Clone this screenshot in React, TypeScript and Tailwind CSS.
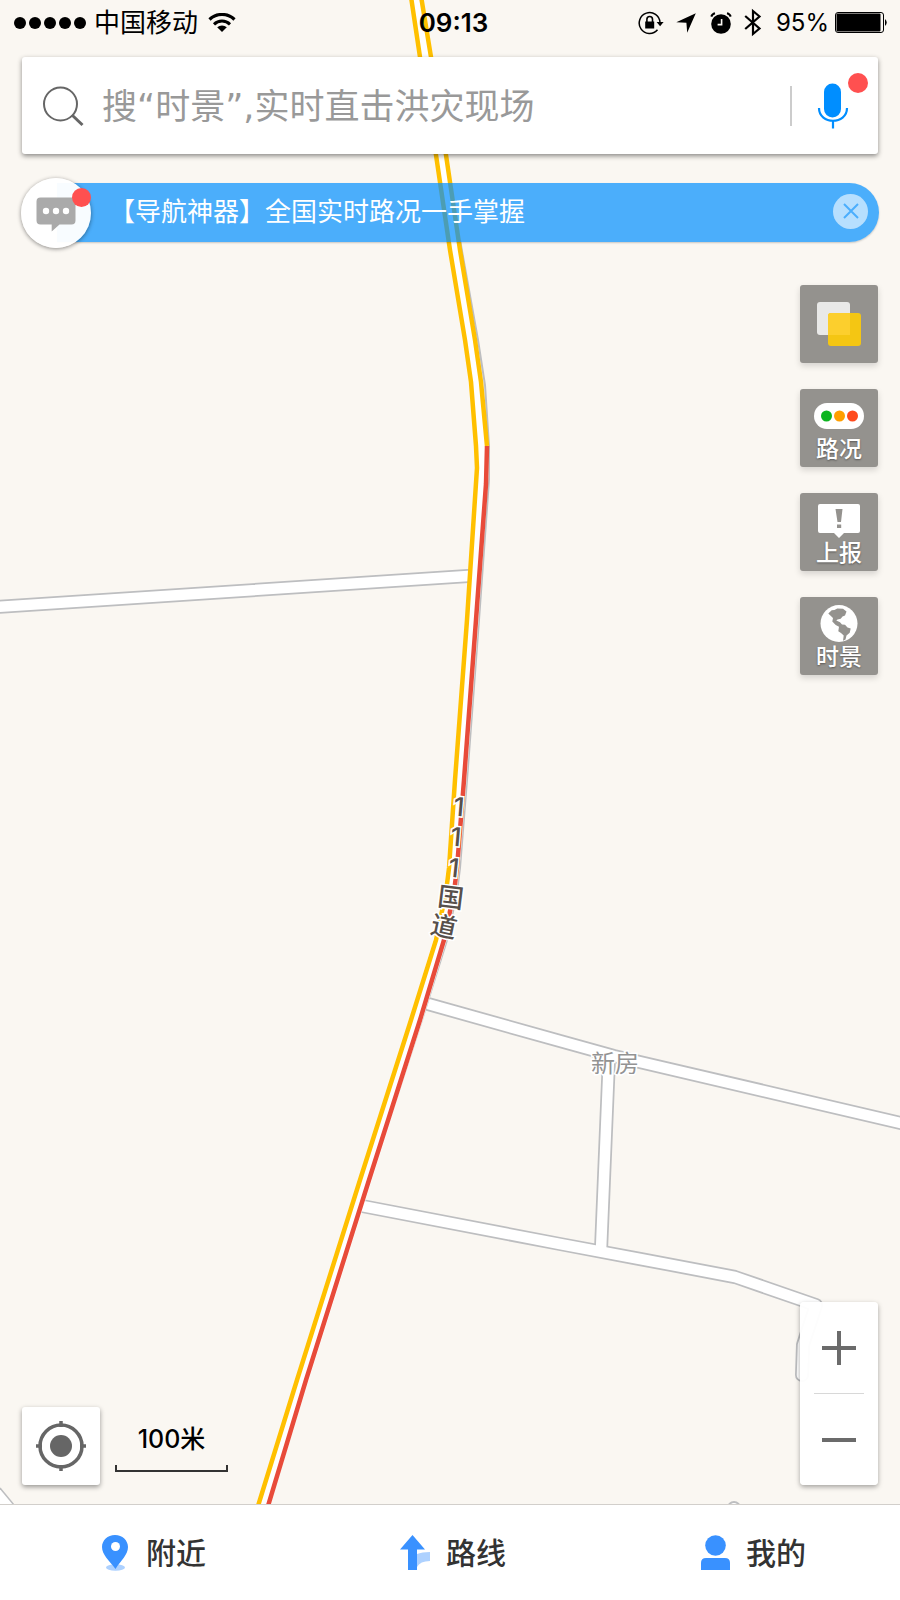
import type { ReactNode } from 'react';

const LEFT_LANE =
  'M410 -10 L420 57 L436 155 L450 250 L465 340 L471 382 L476 446 L477 468 L467 620 L455 780 L449 868 L446 892 L436 940 L411 1020 L360 1180 L297 1380 L258 1506';
const RIGHT_LANE_FREE = 'M420 -10 L431 57 L446 155 L460 250 L475 340 L481 382 L487 446';
const RIGHT_LANE_JAM =
  'M487 446 L486 484 L476 620 L464 780 L457 868 L454 892 L444 940 L420 1020 L369 1180 L306 1380 L268 1506';
const CENTER =
  'M415 -10 L426 57 L441 155 L455 250 L470 340 L476 382 L482 446 L482 476 L472 620 L460 780 L453 868 L450 892 L440 940 L416 1020 L365 1180 L302 1380 L263 1506';
const SHADOW =
  'M460 240 L478 340 L485 385 L489 446 L489 480 L479 620 L467 780 L460 868 L457 892 L447 940 L422 1020 L370 1180 L306 1380';

const SIDE_ROADS = [
  'M-5 607 L468 576',
  'M428 1004 L560 1041 L614 1056 L905 1124',
  'M609 1058 L601 1250',
  'M362 1206 L560 1244 L640 1259 L735 1277 L816 1305 L803 1345 L802 1375',
];

const ROAD_LABEL = [
  { ch: '1', x: 459, y: 806, r: 5 },
  { ch: '1', x: 456, y: 836, r: 5 },
  { ch: '1', x: 454, y: 867, r: 6 },
  { ch: '国', x: 451, y: 897, r: 7 },
  { ch: '道', x: 444, y: 926, r: 12 },
];

function MapCanvas() {
  return (
    <svg
      className="absolute inset-0 -z-10 size-full"
      viewBox="0 0 900 1504"
      preserveAspectRatio="xMidYMid slice"
      fill="none"
      aria-hidden="true"
    >
      {SIDE_ROADS.map((d) => (
        <path key={d} d={d} stroke="#bdbec0" strokeWidth="14" strokeLinejoin="round" strokeLinecap="round" />
      ))}
      {SIDE_ROADS.map((d) => (
        <path key={d} d={d} stroke="#fff" strokeWidth="10.5" strokeLinejoin="round" strokeLinecap="round" />
      ))}
      <path d="M0 1488 L14 1505 L0 1505 Z" fill="#fff" />
      <path d="M0 1488 L14 1505" stroke="#bdbec0" strokeWidth="1.5" />
      <circle cx="734" cy="1508" r="6" stroke="#bdbec0" strokeWidth="2" fill="#fff" />

      <path d={SHADOW} stroke="#bdbec0" strokeWidth="2" />
      <path d={CENTER} stroke="#fff" strokeWidth="13" />
      <path d={LEFT_LANE} stroke="#ffc000" strokeWidth="4.5" strokeLinejoin="round" />
      <path d={RIGHT_LANE_FREE} stroke="#ffc000" strokeWidth="4.5" strokeLinejoin="round" />
      <path d={RIGHT_LANE_JAM} stroke="#e84b3a" strokeWidth="4.5" strokeLinejoin="round" />

      <g
        fontSize="26"
        fontWeight="500"
        fill="#57504b"
        stroke="#fff"
        strokeWidth="3"
        paintOrder="stroke"
        textAnchor="middle"
      >
        {ROAD_LABEL.map(({ ch, x, y, r }) => (
          <text key={y} x={x} y={y + 10} transform={`rotate(${r} ${x} ${y})`}>
            {ch}
          </text>
        ))}
      </g>
      <text
        x="615"
        y="1072"
        fontSize="24"
        fill="#939393"
        stroke="#fff"
        strokeWidth="3"
        paintOrder="stroke"
        textAnchor="middle"
      >
        新房
      </text>
    </svg>
  );
}

function StatusBar() {
  return (
    <header className="grid h-[45px] grid-cols-[1fr_auto_1fr] items-center pr-[11px] pl-3.5 text-[26px] leading-8 text-black">
      <div className="flex items-center">
        <div className="flex gap-[3px]">
          {[0, 1, 2, 3, 4].map((i) => (
            <span key={i} className="size-3 rounded-full bg-black" />
          ))}
        </div>
        <span className="ml-2">中国移动</span>
        <svg className="ml-2.5 h-5 w-7" viewBox="0 0 28 20" fill="none" stroke="#000" aria-hidden="true">
          <path d="M1.5 6.5 A18 18 0 0 1 26.5 6.5" strokeWidth="3.2" />
          <path d="M6 11.3 A11.5 11.5 0 0 1 22 11.3" strokeWidth="3" />
          <path d="M14 19 L9.2 14.3 A7 7 0 0 1 18.8 14.3 Z" fill="#000" stroke="none" />
        </svg>
      </div>
      <span className="pl-1 text-[26px] font-semibold">09:13</span>
      <div className="flex items-center justify-end">
        <svg className="h-6 w-[26px]" viewBox="0 0 26 24" fill="none" aria-hidden="true">
          <path d="M19.5 18.8 A10.4 10.4 0 1 1 22 11.5" stroke="#000" strokeWidth="1.5" />
          <path d="M18.6 11 H25.6 L22.1 15.2 Z" fill="#000" />
          <rect x="7.2" y="10.5" width="9" height="7" fill="#000" />
          <path d="M8.9 11 V8.3 A2.8 2.8 0 0 1 14.5 8.3 V11" stroke="#000" strokeWidth="1.6" />
        </svg>
        <svg className="ml-3 h-5 w-5" viewBox="0 0 20 20" aria-hidden="true">
          <path d="M19.8 0.3 L11.2 19.8 L10.4 9.8 L0.3 9.2 Z" />
        </svg>
        <svg className="ml-3.5 h-[22px] w-[22px]" viewBox="0 0 22 22" fill="none" aria-hidden="true">
          <circle cx="11" cy="12" r="9.8" fill="#000" />
          <path d="M1.3 4.6 A5 5 0 0 1 5 1.2 M17 1.2 A5 5 0 0 1 20.7 4.6" stroke="#000" strokeWidth="2" />
          <path d="M11.6 7 V12.6 H7.6" stroke="#faf7f2" strokeWidth="1.6" />
        </svg>
        <svg className="ml-3 h-[29px] w-[18px]" viewBox="0 0 18 29" fill="none" aria-hidden="true">
          <path d="M1.2 8 L15.5 20.5 L9 26 V3 L15.5 8.5 L1.2 21" stroke="#000" strokeWidth="2.2" />
        </svg>
        <span className="ml-3.5 text-[24px]">95%</span>
        <svg className="ml-1.5 h-[21px] w-[54px]" viewBox="0 0 54 21" fill="none" aria-hidden="true">
          <rect x="0.5" y="0.5" width="48" height="20" rx="2.5" stroke="#000" />
          <rect x="1.5" y="1.5" width="44" height="18" rx="1" fill="#000" />
          <path d="M50 7 Q53.5 10.5 50 14 Z" fill="#000" />
        </svg>
      </div>
    </header>
  );
}

function SearchBar() {
  return (
    <form
      role="search"
      className="mt-3 flex h-[97px] items-center rounded-[3px] bg-white pr-7 pl-5 shadow-[0_2px_5px_rgba(0,0,0,0.45)]"
    >
      <svg className="size-11 shrink-0" viewBox="0 0 44 44" fill="none" stroke="#666" aria-hidden="true">
        <circle cx="18.5" cy="20" r="16.5" strokeWidth="2" />
        <path d="M30 31 L40.5 41" strokeWidth="3" />
      </svg>
      <input
        type="text"
        aria-label="搜索"
        placeholder="搜“时景”,实时直击洪灾现场"
        className="ml-4 h-14 min-w-0 flex-1 bg-transparent pt-0.5 font-['DejaVu_Sans','Noto_Sans_CJK_SC',sans-serif] text-[35px] text-gray-800 outline-none placeholder:text-[#999]"
      />
      <span className="h-10 w-0.5 bg-[#ccc]" />
      <button type="button" aria-label="语音搜索" className="relative ml-6 h-[46px] w-[34px]">
        <svg className="size-full" viewBox="0 0 34 46" fill="none" aria-hidden="true">
          <rect x="8" y="0.5" width="17" height="34" rx="8.5" fill="#008eff" />
          <path d="M3 25 C3 42 31 42 31 25 M17 38.5 V45.5" stroke="#008eff" strokeWidth="2.2" />
        </svg>
        <span className="absolute -top-2.5 -right-[18px] size-5 rounded-full bg-[#ff5050]" />
      </button>
    </form>
  );
}

function Banner() {
  return (
    <section className="relative -mx-px mt-[23px] flex h-[71px] items-center">
      <div className="ml-9 flex h-[59px] flex-1 items-center rounded-r-full bg-[#008fff]/70 pr-[11px] pb-[3px] pl-[52px] shadow-[0_1px_2px_rgba(0,0,0,0.2)]">
        <a href="#traffic" className="flex-1 pt-0.5 text-[26px] leading-9 text-white">
          【导航神器】全国实时路况一手掌握
        </a>
        <button
          type="button"
          aria-label="关闭"
          className="flex size-[35px] items-center justify-center rounded-full bg-[#b7dffe]"
        >
          <svg className="size-4" viewBox="0 0 16 16" stroke="#4aaefd" strokeWidth="2" aria-hidden="true">
            <path d="M1 1 L15 15 M15 1 L1 15" />
          </svg>
        </button>
      </div>
      <button
        type="button"
        aria-label="消息"
        className="absolute bottom-0 left-0 flex size-[70px] items-center justify-center rounded-full bg-white/96 shadow-[0_1px_4px_rgba(0,0,0,0.45)]"
      >
        <svg className="mt-1 h-9 w-10" viewBox="0 0 40 36" aria-hidden="true">
          <path
            d="M4.500 0.500 H35.500 A4 4 0 0 1 39.500 4.500 V23.500 A4 4 0 0 1 35.500 27.500 H23.500 L15.700 34.500 V27.500 H4.500 A4 4 0 0 1 0.500 23.500 V4.500 A4 4 0 0 1 4.500 0.500 Z"
            fill="#aaa"
          />
          <circle cx="10" cy="14" r="3.2" fill="#fff" />
          <circle cx="20" cy="14" r="3.2" fill="#fff" />
          <circle cx="30" cy="14" r="3.2" fill="#fff" />
        </svg>
        <span className="absolute top-2.5 right-0 size-[19px] rounded-full bg-[#ff5050]" />
      </button>
    </section>
  );
}

function Tool({ label, text, children }: { label: string; text?: boolean; children: ReactNode }) {
  return (
    <button
      type="button"
      aria-label={label}
      className="flex size-[78px] flex-col items-center justify-center rounded-[3px] bg-[#94928e] shadow-[0_3px_6px_rgba(0,0,0,0.15)]"
    >
      {children}
      {text && (
        <span className="text-[23px] leading-7 font-medium text-white [text-shadow:0_1px_2px_rgba(0,0,0,0.4)]">
          {label}
        </span>
      )}
    </button>
  );
}

function Tools() {
  return (
    <div className="mt-[37px] flex flex-col gap-[26px] self-end">
      <Tool label="图层">
        <svg className="size-[46px]" viewBox="0 0 46 46" aria-hidden="true">
          <rect x="1" y="1" width="33" height="33" rx="3" fill="#e9e9e8" />
          <rect x="12" y="12" width="33" height="33" rx="3" fill="#f4c613" />
          <path d="M15 12 H34 V34 H12 V15 A3 3 0 0 1 15 12 Z" fill="#fccf2d" />
        </svg>
      </Tool>
      <Tool label="路况" text>
        <svg className="mt-1.5 h-9 w-[50px]" viewBox="0 0 50 36" aria-hidden="true">
          <rect x="0" y="4" width="50" height="26" rx="13" fill="#fff" />
          <circle cx="12.500" cy="17" r="5.500" fill="#0db520" />
          <circle cx="25.500" cy="17" r="5.500" fill="#ff9f00" />
          <circle cx="38.500" cy="17" r="5.500" fill="#ff4a1c" />
        </svg>
      </Tool>
      <Tool label="上报" text>
        <svg className="mt-1.5 h-9 w-[50px]" viewBox="0 0 50 36" aria-hidden="true">
          <path
            d="M6 1 H44 Q46 1 46 3 V28 Q46 30 44 30 H30 L25 35 L20 30 H6 Q4 30 4 28 V3 Q4 1 6 1 Z"
            fill="#fff"
          />
          <path d="M21.500 6 H28.500 L27 19 H23.500 Z M23 21.500 H27.200 V25 H23 Z" fill="#94928e" />
        </svg>
      </Tool>
      <Tool label="时景" text>
        <svg className="mt-1.5 h-9 w-[50px] overflow-visible" viewBox="0 0 50 36" aria-hidden="true">
          <circle cx="25" cy="16.500" r="18.500" fill="#fff" />
          <path
            d="M14.3 6.5 L17.7 3.2 L20.5 3 L23.3 1.500 L29 1.800 L32.500 4.500 L31 8.500 L28.500 9.500 L26.700 11.800 L23.500 12.500 L22.300 13.500 L26 15.300 L28 17.500 L31 17.800 L33.500 20.500 L36.700 21.500 L35.700 25.800 L32.500 28.500 L31.500 32.500 L29 33.800 L29.700 28.500 L27 26 L24.300 24.200 L25 19.800 L21.700 18 L18.300 14.500 L19 11 Z"
            fill="#94928e"
          />
        </svg>
      </Tool>
    </div>
  );
}

function MapFooter() {
  return (
    <div className="mt-auto flex items-end pb-[19px]">
      <button
        type="button"
        aria-label="定位"
        className="flex size-[78px] items-center justify-center rounded-[3px] bg-white shadow-[0_2px_5px_rgba(0,0,0,0.4)]"
      >
        <svg className="size-[50px]" viewBox="0 0 50 50" fill="none" stroke="#666" aria-hidden="true">
          <circle cx="25" cy="25" r="21" strokeWidth="3.500" />
          <circle cx="25" cy="25" r="11" fill="#666" stroke="none" />
          <path d="M25 0 V6 M25 44 V50 M0 25 H6 M44 25 H50" strokeWidth="3.500" />
        </svg>
      </button>
      <div className="mb-[13px] ml-[15px] flex w-[113px] flex-col items-center">
        <span className="text-[25px] leading-8 font-medium text-black [text-shadow:0_0_2px_#fff]">100米</span>
        <span className="mt-2.5 h-[7px] w-full border-2 border-t-0 border-[#333]" />
      </div>
      <div className="ml-auto flex w-[78px] flex-col items-center rounded bg-white/96 shadow-[0_2px_5px_rgba(0,0,0,0.35)]">
        <button type="button" aria-label="放大" className="flex h-[91px] w-full items-center justify-center">
          <svg className="size-[34px]" viewBox="0 0 34 34" stroke="#6b6b6b" strokeWidth="4" aria-hidden="true">
            <path d="M0 17 H34 M17 0 V34" />
          </svg>
        </button>
        <span className="h-px w-[50px] bg-[#d8d8d8]" />
        <button type="button" aria-label="缩小" className="flex h-[91px] w-full items-center justify-center">
          <svg className="size-[34px]" viewBox="0 0 34 34" stroke="#6b6b6b" strokeWidth="4" aria-hidden="true">
            <path d="M0 17 H34" />
          </svg>
        </button>
      </div>
    </div>
  );
}

function NavItem({ href, label, children }: { href: string; label: string; children: ReactNode }) {
  return (
    <a
      href={href}
      className="flex items-center justify-center gap-3.5 pl-1.5 text-[30px] leading-10 font-medium text-[#333]"
    >
      <svg className="h-9 w-8" viewBox="0 0 32 36" aria-hidden="true">
        {children}
      </svg>
      {label}
    </a>
  );
}

export default function App() {
  return (
    <div className="flex min-h-screen flex-col bg-[#faf7f2] font-['Inter','Noto_Sans_CJK_SC',sans-serif]">
      <main className="relative isolate flex flex-1 flex-col overflow-hidden">
        <MapCanvas />
        <StatusBar />
        <div className="flex flex-1 flex-col px-[22px]">
          <SearchBar />
          <Banner />
          <Tools />
          <MapFooter />
        </div>
      </main>
      <nav className="grid h-24 grid-cols-3 border-t border-[#d2cfcb] bg-white">
        <NavItem href="#nearby" label="附近">
          <ellipse cx="15.500" cy="32.500" rx="9.500" ry="3.300" fill="#add1ff" />
          <path
            d="M15 0 C7.500 0 2 5.500 2 12 C2 20 9 25 15.500 34 C21 25 28 20 28 12 C28 5.500 22.500 0 15 0 Z"
            fill="#3991ff"
          />
          <circle cx="15.500" cy="11.500" r="4.500" fill="#fff" />
        </NavItem>
        <NavItem href="#route" label="路线">
          <path d="M17 19 Q22 17 30 17 V26 Q20 26 17 32 Z" fill="#add1ff" />
          <path d="M12.500 0 L25 14.500 H17 V35 H8 V14.500 H0 Z" fill="#3991ff" />
        </NavItem>
        <NavItem href="#mine" label="我的">
          <circle cx="15.500" cy="10.500" r="10.300" fill="#3991ff" />
          <path d="M1 35 V28 Q1 23 6 23 H25 Q30 23 30 28 V35 Z" fill="#3991ff" />
        </NavItem>
      </nav>
    </div>
  );
}
